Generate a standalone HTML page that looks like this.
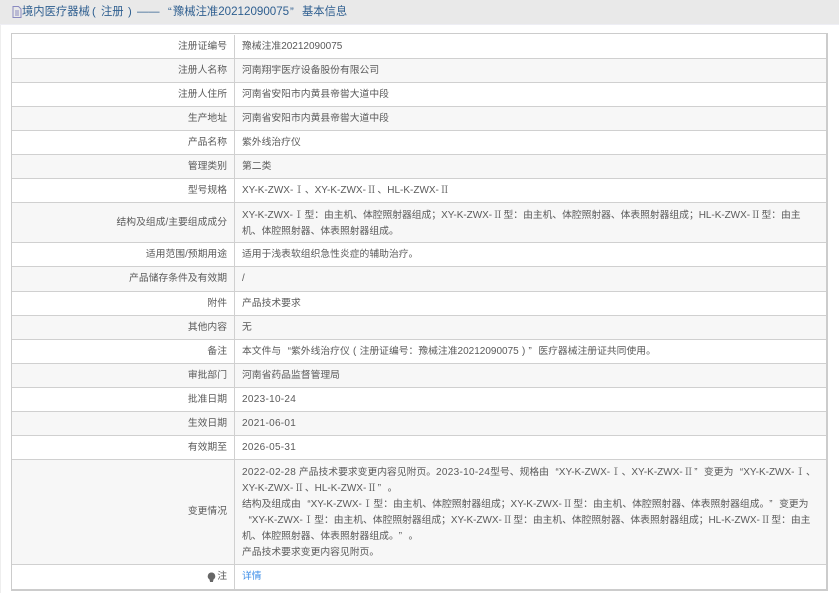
<!DOCTYPE html>
<html lang="zh"><head><meta charset="utf-8"><title>基本信息</title>
<style>
html,body{margin:0;padding:0;background:#fff;}
body{width:839px;height:593px;position:relative;overflow:hidden;font-family:"Liberation Sans","Noto Sans CJK SC",sans-serif;font-size:9.8px;color:#5a5a5a;}
#hd{position:absolute;left:0;top:0;width:839px;height:25px;background:#e9e9e9;border-bottom:1px solid #eeeef4;box-sizing:border-box;}
#hd span{position:absolute;top:4px;line-height:16px;font-size:11.3px;color:#2f5f90;white-space:nowrap;}
#hd span u{font-size:11.600px;}
#hd svg{position:absolute;left:12px;top:6px;}
#edge{position:absolute;left:0;top:25px;width:1px;height:568px;background:#eee;}
#t{position:absolute;left:11px;top:33px;width:814px;height:555px;border:1px solid #ccc;border-right-width:2px;border-bottom-width:2px;}
.r{position:absolute;left:0;width:814px;border-bottom:1px solid #d0d0d0;box-sizing:border-box;}
.g{background:#f7f7f7;}
.l{position:absolute;left:0;top:0;bottom:0;width:215px;padding-right:7px;border-right:1px solid #d0d0d0;display:flex;align-items:center;justify-content:flex-end;white-space:nowrap;line-height:16px;}
.v{position:absolute;left:230px;top:0;bottom:0;display:flex;flex-direction:column;justify-content:center;white-space:nowrap;line-height:16px;}
.m{top:1px;bottom:-1px;}
.v div{height:16px;}
.s{letter-spacing:-.04px;}
a{color:#3f8fe8;text-decoration:none;}
u{text-decoration:none;font-size:10px;line-height:0;}
.d{letter-spacing:.3px;}
i{font-style:normal;display:inline-block;width:9.800px;line-height:0;}
.c{text-align:center;}
.a{text-align:right;}
.b{text-align:left;}
.n{width:11.500px;text-align:center;font-family:"Noto Serif CJK SC",serif;font-size:10px;}
.t{font-family:"Noto Sans CJK TC",sans-serif;line-height:0;}
</style></head><body>
<div id="hd">
<svg width="10" height="12" viewBox="0 0 10 12"><path d="M1 .5h5.500L9 3v8.500H1z M3 5h4M3 7h4M3 9h4" fill="none" stroke="#8a8ac0" stroke-width="1"/></svg>
<span style="left:22px">境内医疗器械</span><span style="left:92px">(</span><span style="left:101px">注册</span><span style="left:128px">)</span><span style="left:137px">——</span><span style="left:168px">“</span><span style="left:173px">豫械注准<u>20212090075</u></span><span style="left:290px">”</span><span style="left:302px">基本信息</span></div>
<div id="edge"></div>
<div id="t">
<div class="r" style="top:0;height:25px"><div class="l m">注册证编号</div><div class="v m"><span>豫械注准<u>20212090075</u></span></div></div>
<div class="r g" style="top:25px;height:24px"><div class="l">注册人名称</div><div class="v">河南翔宇医疗设备股份有限公司</div></div>
<div class="r" style="top:49px;height:24px"><div class="l">注册人住所</div><div class="v">河南省安阳市内黄县帝喾大道中段</div></div>
<div class="r g" style="top:73px;height:24px"><div class="l">生产地址</div><div class="v">河南省安阳市内黄县帝喾大道中段</div></div>
<div class="r" style="top:97px;height:24px"><div class="l">产品名称</div><div class="v">紫外线治疗仪</div></div>
<div class="r g" style="top:121px;height:24px"><div class="l">管理类别</div><div class="v">第二类</div></div>
<div class="r" style="top:145px;height:24px"><div class="l">型号规格</div><div class="v"><span><u>XY-K-ZWX-</u><i class="n">Ⅰ</i>、<u>XY-K-ZWX-</u><i class="n">Ⅱ</i>、<u>HL-K-ZWX-</u><i class="n">Ⅱ</i></span></div></div>
<div class="r g" style="top:169px;height:40px"><div class="l">结构及组成/主要组成成分</div><div class="v m"><div class="s"><u>XY-K-ZWX-</u><i class="n">Ⅰ</i>型<span class="t">：</span>由主机、体腔照射器组成<span class="t">；</span><u>XY-K-ZWX-</u><i class="n">Ⅱ</i>型<span class="t">：</span>由主机、体腔照射器、体表照射器组成<span class="t">；</span><u>HL-K-ZWX-</u><i class="n">Ⅱ</i>型<span class="t">：</span>由主</div><div>机、体腔照射器、体表照射器组成。</div></div></div>
<div class="r" style="top:209px;height:24px"><div class="l">适用范围/预期用途</div><div class="v">适用于浅表软组织急性炎症的辅助治疗。</div></div>
<div class="r g" style="top:233px;height:25px"><div class="l">产品储存条件及有效期</div><div class="v">/</div></div>
<div class="r" style="top:258px;height:24px"><div class="l">附件</div><div class="v">产品技术要求</div></div>
<div class="r g" style="top:282px;height:24px"><div class="l">其他内容</div><div class="v">无</div></div>
<div class="r" style="top:306px;height:24px"><div class="l">备注</div><div class="v"><span>本文件与<i class="a">“</i>紫外线治疗仪<i class="c">(</i>注册证编号<span class="t">：</span>豫械注准<u>20212090075</u><i class="c">)</i><i class="b">”</i>医疗器械注册证共同使用。</span></div></div>
<div class="r g" style="top:330px;height:24px"><div class="l">审批部门</div><div class="v">河南省药品监督管理局</div></div>
<div class="r" style="top:354px;height:24px"><div class="l">批准日期</div><div class="v"><u class="d">2023-10-24</u></div></div>
<div class="r g" style="top:378px;height:24px"><div class="l">生效日期</div><div class="v"><u class="d">2021-06-01</u></div></div>
<div class="r" style="top:402px;height:24px"><div class="l">有效期至</div><div class="v"><u class="d">2026-05-31</u></div></div>
<div class="r g" style="top:426px;height:105px"><div class="l">变更情况</div><div class="v m">
<div><u class="d">2022-02-28</u> 产品技术要求变更内容见附页。<u class="d">2023-10-24</u>型号、规格由<i class="a">“</i><u>XY-K-ZWX-</u><i class="n">Ⅰ</i>、<u>XY-K-ZWX-</u><i class="n">Ⅱ</i><i class="b">”</i>变更为<i class="a">“</i><u>XY-K-ZWX-</u><i class="n">Ⅰ</i>、</div>
<div><u>XY-K-ZWX-</u><i class="n">Ⅱ</i>、<u>HL-K-ZWX-</u><i class="n">Ⅱ</i><i class="b">”</i>。</div>
<div>结构及组成由<i class="a">“</i><u>XY-K-ZWX-</u><i class="n">Ⅰ</i>型<span class="t">：</span>由主机、体腔照射器组成<span class="t">；</span><u>XY-K-ZWX-</u><i class="n">Ⅱ</i>型<span class="t">：</span>由主机、体腔照射器、体表照射器组成。<i class="b">”</i>变更为</div>
<div class="s"><i class="a">“</i><u>XY-K-ZWX-</u><i class="n">Ⅰ</i>型<span class="t">：</span>由主机、体腔照射器组成<span class="t">；</span><u>XY-K-ZWX-</u><i class="n">Ⅱ</i>型<span class="t">：</span>由主机、体腔照射器、体表照射器组成<span class="t">；</span><u>HL-K-ZWX-</u><i class="n">Ⅱ</i>型<span class="t">：</span>由主</div>
<div>机、体腔照射器、体表照射器组成。<i class="b">”</i>。</div>
<div>产品技术要求变更内容见附页。</div></div></div>
<div class="r" style="top:531px;height:24px;border-bottom:0"><div class="l"><svg width="9" height="11" viewBox="0 0 9 11" style="margin-right:1px"><path d="M4.500 .5a3.800 3.800 0 0 1 2 7l-.6 2.500H3.100L2.500 7.500a3.800 3.800 0 0 1 2-7z" fill="#666"/></svg>注</div><div class="v"><a href="#">详情</a></div></div>
</div>
</body></html>
